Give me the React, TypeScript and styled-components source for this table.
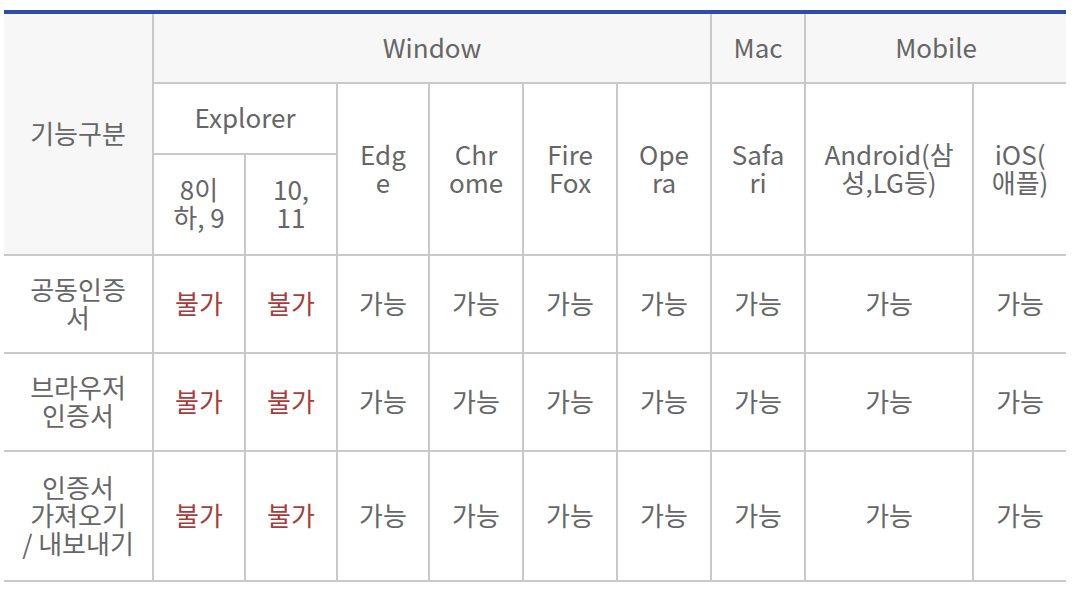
import { createGlobalStyle, styled } from 'styled-components'

const GlobalStyle = createGlobalStyle`
  body {
    margin: 0;
    background: #fff;
    font-family: "Noto Sans CJK KR", "Noto Sans", sans-serif;
  }
`

const Wrapper = styled.div`
  padding: 10px 12px 0 4px;
`

const Table = styled.table`
  width: 1062px;
  table-layout: fixed;
  border-collapse: separate;
  border-spacing: 0;
  border-top: 4px solid #2f4ca8;
  color: #666;
  font-size: 26px;
  line-height: 28px;
`

const Row = styled.tr<{ $h: number }>`
  height: ${p => p.$h}px;
`

const HeadCell = styled.th<{ $shade?: boolean; $last?: boolean }>`
  box-sizing: border-box;
  padding: 0 0 3px;
  font-weight: 400;
  text-align: center;
  vertical-align: middle;
  white-space: nowrap;
  background: ${p => (p.$shade ? '#f7f7f7' : '#fff')};
  border-bottom: 2px solid #c9c9c9;
  border-right: ${p => (p.$last ? 'none' : '2px solid #c9c9c9')};
`

const Cell = styled.td<{ $denied?: boolean; $last?: boolean }>`
  box-sizing: border-box;
  padding: 0 0 3px;
  text-align: center;
  vertical-align: middle;
  white-space: nowrap;
  color: ${p => (p.$denied ? '#a63c3c' : '#666')};
  border-bottom: 2px solid #c9c9c9;
  border-right: ${p => (p.$last ? 'none' : '2px solid #c9c9c9')};
`

const Line = styled.span`
  display: block;
  height: 28px;
`

const widths = [150, 92, 92, 92, 94, 94, 94, 94, 168, 92]

const browsers = [
  ['Edg', 'e'],
  ['Chr', 'ome'],
  ['Fire', 'Fox'],
  ['Ope', 'ra'],
  ['Safa', 'ri'],
  ['Android(삼', '성,LG등)'],
  ['iOS(', '애플)'],
]

const features = [
  { label: ['공동인증', '서'], h: 98 },
  { label: ['브라우저', '인증서'], h: 98 },
  { label: ['인증서', '가져오기', '/ 내보내기'], h: 130 },
]

const results = ['불가', '불가', '가능', '가능', '가능', '가능', '가능', '가능', '가능']

function Lines({ parts }: { parts: string[] }) {
  return (
    <>
      {parts.map((t, i) => (
        <Line key={i}>{t}</Line>
      ))}
    </>
  )
}

function App() {
  return (
    <Wrapper>
      <GlobalStyle />
      <Table>
        <colgroup>
          {widths.map((w, i) => (
            <col key={i} style={{ width: w }} />
          ))}
        </colgroup>
        <thead>
          <Row $h={70}>
            <HeadCell $shade rowSpan={3}>기능구분</HeadCell>
            <HeadCell $shade colSpan={6}>Window</HeadCell>
            <HeadCell $shade>Mac</HeadCell>
            <HeadCell $shade $last colSpan={2}>Mobile</HeadCell>
          </Row>
          <Row $h={71}>
            <HeadCell colSpan={2}>Explorer</HeadCell>
            {browsers.map((b, i) => (
              <HeadCell key={i} rowSpan={2} $last={i === browsers.length - 1}>
                <Lines parts={b} />
              </HeadCell>
            ))}
          </Row>
          <Row $h={101}>
            <HeadCell>
              <Lines parts={['8이', '하, 9']} />
            </HeadCell>
            <HeadCell>
              <Lines parts={['10,', '11']} />
            </HeadCell>
          </Row>
        </thead>
        <tbody>
          {features.map((f, r) => (
            <Row key={r} $h={f.h}>
              <Cell>
                <Lines parts={f.label} />
              </Cell>
              {results.map((v, i) => (
                <Cell key={i} $denied={v === '불가'} $last={i === results.length - 1}>
                  {v}
                </Cell>
              ))}
            </Row>
          ))}
        </tbody>
      </Table>
    </Wrapper>
  )
}

export default App
